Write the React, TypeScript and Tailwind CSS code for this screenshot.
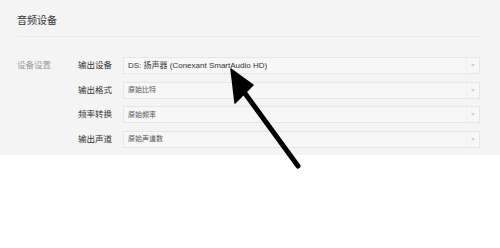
const rows = [
  { label: '输出设备', value: 'DS: 扬声器 (Conexant SmartAudio HD)', big: true },
  { label: '输出格式', value: '原始比特', big: false },
  { label: '频率转换', value: '原始频率', big: false },
  { label: '输出声道', value: '原始声道数', big: false },
];

const font = { fontFamily: '"Liberation Sans", "Noto Sans CJK SC", sans-serif' };

export default function App() {
  return (
    <div className="relative w-[500px] h-[248px] bg-white overflow-hidden" style={font}>
      <div className="w-full h-[155px] bg-[#f4f4f4] pl-[17px] pr-[20px]">
        {/* 标题 */}
        <div className="h-[37px] pt-[15px] border-b border-[#ebebeb]">
          <h1 className="text-[10px] leading-[12px] text-[#333]">音频设备</h1>
        </div>

        {/* 设备设置 */}
        <div className="flex pt-[20px]">
          <div className="w-[61px] pt-[3px] text-[8.5px] leading-[11px] text-[#9a9a9a]">设备设置</div>
          <div className="flex-1 flex flex-col gap-[7.5px]">
            {rows.map((row) => (
              <div key={row.label} className="flex items-center">
                <span className="w-[45px] text-[8.5px] leading-[11px] text-[#333]">{row.label}</span>
                <div className="flex-1 h-[17px] flex items-center bg-[#f7f7f7] border border-[#e6e6e6]">
                  <span
                    className={
                      row.big
                        ? 'flex-1 pl-[4px] text-[8px] leading-[11px] text-[#333] whitespace-nowrap'
                        : 'flex-1 pl-[4px] text-[7px] leading-[10px] text-[#555] whitespace-nowrap'
                    }
                  >
                    {row.value}
                  </span>
                  <span className="w-[13px] h-full flex items-center justify-center border-l border-[#eeeeee]">
                    <span className="w-0 h-0 border-l-[2px] border-r-[2px] border-t-[3px] border-l-transparent border-r-transparent border-t-[#cfcfcf]" />
                  </span>
                </div>
              </div>
            ))}
          </div>
        </div>
      </div>

      {/* 标注箭头 */}
      <svg className="absolute inset-0 pointer-events-none" width="500" height="248" viewBox="0 0 500 248">
        <line x1="298" y1="166" x2="244" y2="92" stroke="#000" strokeWidth="5" strokeLinecap="round" />
        <polygon points="231,69 253,85 235,103" fill="#000" stroke="#000" strokeWidth="1.5" strokeLinejoin="round" />
      </svg>
    </div>
  );
}
